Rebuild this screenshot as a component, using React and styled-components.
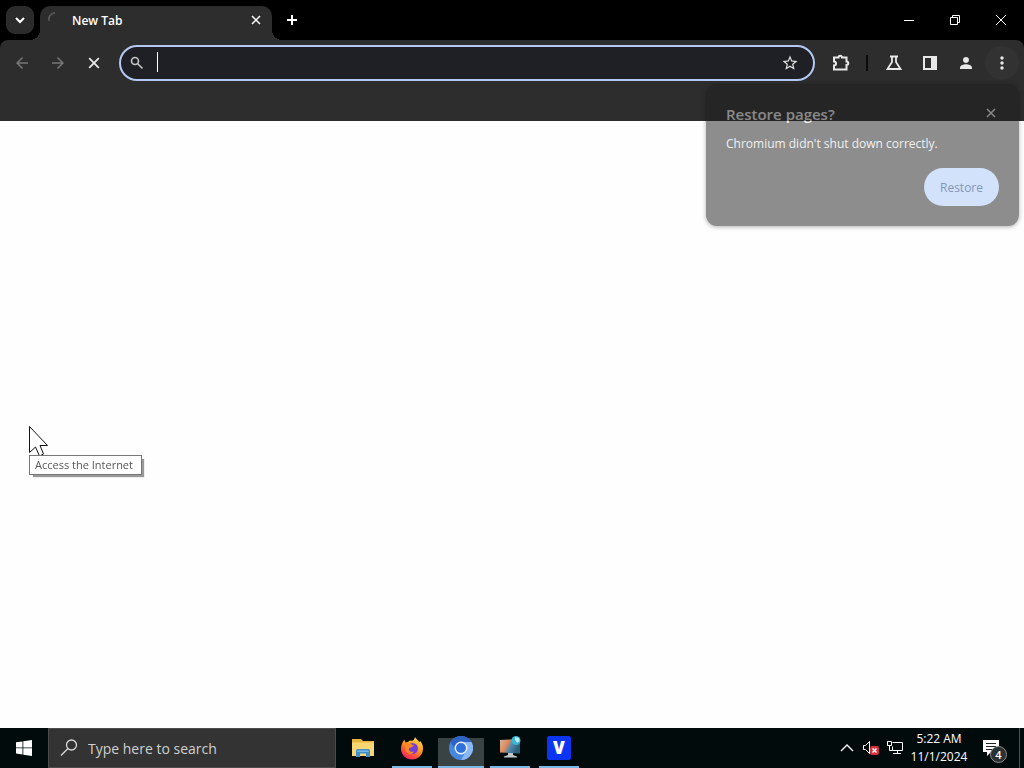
import React from "react";
import styled, { createGlobalStyle } from "styled-components";

const GlobalStyle = createGlobalStyle`
  *, *::before, *::after { box-sizing: border-box; }
  body { margin: 0; background: #fefefe; font-family: "Open Sans", "Noto Sans", sans-serif; }
  button, input { font: inherit; color: inherit; border: 0; padding: 0; background: none; }
  svg { display: block; flex: none; }
`;

const Desktop = styled.div`
  min-height: 100vh;
  display: flex;
  flex-direction: column;
`;

const Browser = styled.div`
  flex: 1;
  display: flex;
  flex-direction: column;
  background: #fefefe;
`;

const TitleBar = styled.header`
  height: 40px;
  display: flex;
  background: #000;
  color: #fff;
`;

const TabSearch = styled.button`
  width: 28px;
  height: 28px;
  margin: 6px 6px 0;
  display: grid;
  place-items: center;
  border-radius: 9px;
  background: #2b2b2b;
`;

const Tab = styled.div`
  position: relative;
  width: 232px;
  height: 34px;
  margin-top: 6px;
  padding: 0 8px;
  display: flex;
  gap: 8px;
  background: #2d2d2d;
  border-radius: 10px 10px 0 0;

  &::before, &::after {
    content: "";
    position: absolute;
    bottom: 0;
    width: 10px;
    height: 10px;
  }
  &::before {
    left: -10px;
    background: radial-gradient(circle at 0 0, transparent 10px, #2d2d2d 10px);
  }
  &::after {
    right: -10px;
    background: radial-gradient(circle at 100% 0, transparent 10px, #2d2d2d 10px);
  }
`;

const TabSpinner = styled.span`
  width: 16px;
  height: 28px;
  display: grid;
  place-items: center;
  color: #555;
`;

const TabTitle = styled.span`
  flex: 1;
  line-height: 30px;
  font-size: 12px;
  font-weight: 600;
`;

const SmallButton = styled.button`
  width: 16px;
  height: 28px;
  display: grid;
  place-items: center;
`;

const NewTab = styled.button`
  width: 28px;
  height: 28px;
  margin: 6px 0 0 6px;
  display: grid;
  place-items: center;
`;

const WindowControls = styled.div`
  margin-left: auto;
  display: flex;
`;

const WindowButton = styled.button`
  width: 46px;
  height: 40px;
  display: grid;
  place-items: center;
`;

const ToolbarBack = styled.div`
  background: #000;
`;

const Toolbar = styled.div`
  position: relative;
  height: 46px;
  padding: 0 5px;
  display: flex;
  align-items: center;
  gap: 2px;
  background: #2d2d2d;
  color: #e3e3e3;
  border-radius: 8px 8px 0 0;
`;

const ToolButton = styled.button`
  width: 34px;
  height: 34px;
  display: grid;
  place-items: center;
  border-radius: 50%;
  color: ${(p) => (p.$dim ? "#777" : "#e8e8e8")};
  background: ${(p) => (p.$lit ? "#323232" : "transparent")};
`;

const Omnibox = styled.label`
  flex: 1;
  height: 36px;
  margin: 0 7px 0 6px;
  padding: 0 14px 0 9px;
  display: flex;
  align-items: center;
  gap: 13px;
  background: #1f2025;
  border: 2px solid #b3c9f3;
  border-radius: 18px;
`;

const AddressField = styled.span`
  flex: 1;
  display: flex;
  align-items: center;
`;

const Caret = styled.span`
  width: 1px;
  height: 20px;
  margin-bottom: 2px;
  background: #fff;
`;

const Address = styled.input`
  flex: 1;
  min-width: 0;
  height: 24px;
  font-size: 14px;
  outline: none;
`;

const StarButton = styled.button`
  width: 18px;
  height: 18px;
`;

const Divider = styled.span`
  width: 3px;
  height: 16px;
  margin: 0 6px;
  background: #0c0c0c;
  border-right: 1px solid #2d2d2d;
`;

const BookmarksBar = styled.div`
  height: 35px;
  background: #2d2d2d;
`;

const Bubble = styled.section`
  position: absolute;
  z-index: 2;
  top: 44px;
  right: 5px;
  width: 313px;
  padding: 17px 20px 20px;
  display: flex;
  flex-direction: column;
  background: #1f1f1f;
  color: #e3e3e3;
  border-radius: 11px;
  box-shadow: 0 1px 4px #0009;
  opacity: 0.5;
`;

const BubbleHead = styled.div`
  display: flex;
  justify-content: space-between;
  height: 26px;
`;

const BubbleTitle = styled.h2`
  margin: 0;
  font-size: 15px;
  line-height: 26px;
  font-weight: 600;
`;

const Dismiss = styled.button`
  width: 16px;
  height: 24px;
  display: grid;
  place-items: center;
`;

const BubbleText = styled.p`
  margin: 7px 0 14px;
  font-size: 12px;
  line-height: 20px;
  font-weight: 500;
`;

const RestoreButton = styled.button`
  && {
    align-self: flex-end;
    width: 75px;
    height: 38px;
    border-radius: 19px;
    background: #a8c7fa;
    color: #062e6f;
    font-size: 12px;
    font-weight: 500;
  }
`;

const Page = styled.main`
  flex: 1;
`;

const Pointer = styled.div`
  position: fixed;
  z-index: 3;
  left: 29px;
  top: 426px;
`;

const Tooltip = styled.div`
  position: absolute;
  left: 0;
  top: 29px;
  height: 20px;
  padding: 0 8px 0 5px;
  background: #fff;
  border: 1px solid #767676;
  box-shadow: 3px 3px 1px -1px #999;
  color: #575757;
  font-size: 11px;
  line-height: 18px;
  white-space: nowrap;
`;

const Taskbar = styled.footer`
  height: 40px;
  display: flex;
  background: #020b0c;
  color: #fff;
`;

const StartButton = styled.button`
  width: 48px;
  display: grid;
  place-items: center;
`;

const SearchBox = styled.label`
  width: 288px;
  padding: 0 11px;
  display: flex;
  align-items: center;
  gap: 10px;
  background: #333;
  border: 1px solid #4c4c4c;
  color: #d8d8d8;
`;

const SearchInput = styled.input`
  flex: 1;
  min-width: 0;
  font-size: 14px;
  outline: none;
  &::placeholder { color: #d0d0d0; opacity: 1; }
`;

const Apps = styled.nav`
  margin-left: 4px;
  display: flex;
  gap: 3px;
`;

const AppButton = styled.button`
  position: relative;
  width: 46px;
  height: 40px;
  display: grid;
  place-items: center;
  background: ${(p) => (p.$active ? "linear-gradient(#020b0c 10px, #3a4344 10px)" : "none")};

  &::after {
    content: "";
    position: absolute;
    bottom: 0;
    left: ${(p) => (p.$active ? "0" : "3px")};
    right: ${(p) => (p.$active ? "0" : "3px")};
    height: 2px;
    background: ${(p) => (p.$open ? "#7cb9e4" : "transparent")};
  }
`;

const VLogo = styled.span`
  width: 24px;
  height: 24px;
  border-radius: 2px;
  background: #0b35f0;
  font-size: 17px;
  line-height: 24px;
  font-weight: 800;
  text-align: center;
`;

const Tray = styled.div`
  margin-left: auto;
  display: flex;
`;

const TrayButton = styled.button`
  width: 24px;
  height: 40px;
  display: grid;
  place-items: center;
`;

const Clock = styled.button`
  width: 64px;
  height: 40px;
  font-size: 12px;
  line-height: 18px;
  text-align: center;
  white-space: nowrap;
`;

const ClockLine = styled.span`
  display: block;
`;

const Notifications = styled.button`
  && {
    position: relative;
    width: 48px;
    height: 40px;
    padding-left: 11px;
    display: grid;
    place-items: center start;
  }
`;

const Badge = styled.span`
  position: absolute;
  left: 19px;
  top: 18px;
  width: 17px;
  height: 17px;
  border: 1px solid #8a8f90;
  border-radius: 50%;
  background: #2a3132;
  font-size: 11px;
  line-height: 15px;
  font-weight: 600;
  text-align: center;
`;

const ShowDesktop = styled.button`
  && {
    width: 5px;
    border-left: 1px solid #4a5253;
  }
`;

const Line = ({ size, d, w = 2, box = 24, ...rest }) => (
  <svg width={size} height={size} viewBox={`0 0 ${box} ${box}`} fill="none" stroke="currentColor" strokeWidth={w} {...rest}>
    <path d={d} />
  </svg>
);

const Solid = ({ size, d, ...rest }) => (
  <svg width={size} height={size} viewBox="0 0 24 24" fill="currentColor" {...rest}>
    <path d={d} />
  </svg>
);

const ARROW_BACK = "M20 11H7.83l5.59-5.59L12 4l-8 8 8 8 1.41-1.41L7.83 13H20v-2z";
const ARROW_NEXT = "M12 4l-1.41 1.41L16.17 11H4v2h12.17l-5.58 5.59L12 20l8-8z";
const STAR = "M22 9.24l-7.19-.62L12 2 9.19 8.63 2 9.24l5.46 4.73L5.82 21 12 17.27 18.18 21l-1.63-7.03L22 9.24zM12 15.4l-3.76 2.27 1-4.28-3.32-2.88 4.38-.38L12 6.1l1.71 4.04 4.38.38-3.32 2.88 1 4.28L12 15.4z";
const PERSON = "M12 12c2.5 0 4.500-2 4.500-4.500S14.500 3 12 3 7.500 5 7.500 7.500 9.500 12 12 12zm0 2c-3.500 0-9 1.800-9 5v2h18v-2c0-3.200-5.500-5-9-5z";
const DOTS = "M12 8c1.100 0 2-.9 2-2s-.9-2-2-2-2 .9-2 2 .9 2 2 2zm0 2c-1.100 0-2 .9-2 2s.9 2 2 2 2-.9 2-2-.9-2-2-2zm0 6c-1.100 0-2 .9-2 2s.9 2 2 2 2-.9 2-2-.9-2-2-2z";
const CROSS = "M1 1l8 8M9 1l-8 8";

const FolderIcon = () => (
  <svg width="24" height="24" viewBox="0 0 24 24">
    <path d="M1 3h9l2 2h11v4H1z" fill="#e8b53c" />
    <path d="M1 6.500h22V20H1z" fill="#f8d772" />
    <path d="M5 21v-6.500q0-1.500 1.500-1.500h11q1.500 0 1.500 1.500V21h-4v-3.500H9V21z" fill="#3f8fd0" />
    <path d="M6.500 14.500h11v1.500h-11z" fill="#7bb8e4" />
  </svg>
);

const FirefoxIcon = () => (
  <svg width="24" height="24" viewBox="0 0 24 24">
    <defs>
      <linearGradient id="fox" x1=".8" y1="0" x2=".25" y2="1">
        <stop offset="0" stopColor="#ffe04a" />
        <stop offset=".45" stopColor="#ff9a22" />
        <stop offset=".75" stopColor="#ff4a3a" />
        <stop offset="1" stopColor="#e9206d" />
      </linearGradient>
    </defs>
    <path d="M15 1c1 2 3 3 4.500 5l.8-1c2 2.500 2.900 5 2.700 8-.4 6-5 10.500-11 10.500S1 19 1 12.800C1 9 2.400 6 4.400 3.800L5.500 6.500l2.800-.8C9.500 4.500 10.500 4.300 12 5c1.500-.8 2.800-2 3-4z" fill="url(#fox)" />
    <circle cx="12.500" cy="12.500" r="5.500" fill="#7440d8" />
    <path d="M5 8c2-1.500 5-1 7 .8l2 .7-2.500 1.700c-1.500.2-3 1-2.700 2.600.4 2 3.200 2.700 5.500 1.400-1.500 3.300-6.500 3.500-8.300.2C5 13.500 5.500 10 5 8z" fill="#ff8a22" />
  </svg>
);

const ChromiumIcon = () => (
  <svg width="24" height="24" viewBox="0 0 24 24">
    <circle cx="12" cy="12" r="12" fill="#4688df" />
    <path d="M1.600 6A12 12 0 0 1 22.400 6H12a6 6 0 0 0-5.200 9z" fill="#2d63c4" />
    <path d="M22.400 6A12 12 0 0 1 12 24l5.200-9A6 6 0 0 0 12 6z" fill="#8bb7f4" />
    <circle cx="12" cy="12" r="6.500" fill="#e9f1ff" />
    <circle cx="12" cy="12" r="5" fill="#2f71db" />
  </svg>
);

const MonitorIcon = () => (
  <svg width="24" height="24" viewBox="0 0 24 24">
    <defs>
      <linearGradient id="screen" x1="0" y1="0" x2="1" y2=".4">
        <stop offset="0" stopColor="#c9b9a4" />
        <stop offset=".4" stopColor="#e58a58" />
        <stop offset=".65" stopColor="#5288ad" />
        <stop offset="1" stopColor="#2a6078" />
      </linearGradient>
    </defs>
    <path d="M2 4l20-1v14.500L2 16.500z" fill="url(#screen)" />
    <path d="M10 17h5v2l4 1.500v1H6v-1l4-1.500z" fill="#c3c7c9" />
    <circle cx="18" cy="4.500" r="4.500" fill="#3cb6d7" />
    <path d="M17 1l4 1 .5 3.500-2.500 1-2-2.500z" fill="#b5f1f3" />
  </svg>
);

export default function App() {
  return (
    <>
      <GlobalStyle />
      <Desktop>
        <Browser>
          <TitleBar>
            <TabSearch aria-label="Search tabs">
              <Line size={10} box={10} d="M1 3l4 4 4-4" />
            </TabSearch>
            <Tab>
              <TabSpinner>
                <Line size={16} box={16} d="M1 9C0 5 3 1 7 1" />
              </TabSpinner>
              <TabTitle>New Tab</TabTitle>
              <SmallButton aria-label="Close tab">
                <Line size={10} box={10} w={1.5} d={CROSS} />
              </SmallButton>
            </Tab>
            <NewTab aria-label="New tab">
              <Line size={12} box={12} d="M6 1v10M1 6h10" />
            </NewTab>
            <WindowControls>
              <WindowButton aria-label="Minimize">
                <Line size={10} box={10} w={1} d="M0 5.500h10" />
              </WindowButton>
              <WindowButton aria-label="Restore down">
                <Line size={10} box={10} w={1} d="M.5 2.500h7v7h-7zM2.500 2.500v-2h7v7h-2" />
              </WindowButton>
              <WindowButton aria-label="Close">
                <Line size={10} box={10} w={1} d="M0 0l10 10M10 0L0 10" />
              </WindowButton>
            </WindowControls>
          </TitleBar>
          <ToolbarBack>
            <Toolbar>
              <ToolButton $dim aria-label="Back"><Solid size={18} d={ARROW_BACK} /></ToolButton>
              <ToolButton $dim aria-label="Forward"><Solid size={18} d={ARROW_NEXT} /></ToolButton>
              <ToolButton aria-label="Stop loading">
                <Line size={12} box={12} w={1.8} d="M1.200 1.200l9.600 9.600M10.800 1.200l-9.600 9.600" />
              </ToolButton>
              <Omnibox>
                <Line size={14} box={14} w={1.6} d="M8.500 5a3.500 3.500 0 1 1-7 0 3.500 3.500 0 0 1 7 0zM7.500 7.500l5 5" color="#c7c7c7" />
                <AddressField>
                  <Caret />
                  <Address aria-label="Address and search bar" />
                </AddressField>
                <StarButton aria-label="Bookmark this tab"><Solid size={18} d={STAR} /></StarButton>
              </Omnibox>
              <ToolButton aria-label="Extensions">
                <Line size={20} box={20} d="M3 4.500h4.500a1.500 1.500 0 0 1 3.500 0H15.500v4a1.500 1.500 0 0 1 0 3.500v4.500H3v-4a2 2 0 0 0 0-4z" />
              </ToolButton>
              <Divider />
              <ToolButton aria-label="Experiments">
                <Line size={18} box={18} w={1.8} d="M5 2.500h8M7 3v5l-4.500 7h13L11 8V3" />
              </ToolButton>
              <ToolButton aria-label="Side panel">
                <svg width="16" height="16" viewBox="0 0 16 16" fill="none" stroke="currentColor" strokeWidth="2">
                  <path d="M2 2h12v12H2z" />
                  <path d="M10 2h4v12h-4z" fill="currentColor" />
                </svg>
              </ToolButton>
              <ToolButton aria-label="Profile"><Solid size={16} d={PERSON} /></ToolButton>
              <ToolButton $lit aria-label="Menu"><Solid size={20} d={DOTS} /></ToolButton>

              <Bubble>
                <BubbleHead>
                  <BubbleTitle>Restore pages?</BubbleTitle>
                  <Dismiss aria-label="Dismiss">
                    <Line size={10} box={10} w={1.5} d={CROSS} />
                  </Dismiss>
                </BubbleHead>
                <BubbleText>Chromium didn't shut down correctly.</BubbleText>
                <RestoreButton>Restore</RestoreButton>
              </Bubble>
            </Toolbar>
          </ToolbarBack>
          <BookmarksBar />
          <Page />
        </Browser>

        <Taskbar>
          <StartButton aria-label="Start">
            <Solid size={16} viewBox="0 0 16 16" d="M0 2.300l6.500-.9v6.100H0zM7.300 1.300L16 0v7.500H7.300zM0 8.300h6.500v6.200L0 13.600zM7.300 8.300H16V16l-8.700-1.300z" />
          </StartButton>
          <SearchBox>
            <Line size={18} box={18} w={1.3} d="M16.500 6a5 5 0 1 1-10 0 5 5 0 0 1 10 0zM8 9.500L1 16.500" />
            <SearchInput aria-label="Search" placeholder="Type here to search" />
          </SearchBox>
          <Apps>
            <AppButton aria-label="File Explorer"><FolderIcon /></AppButton>
            <AppButton $open aria-label="Firefox"><FirefoxIcon /></AppButton>
            <AppButton $open $active aria-label="Chromium"><ChromiumIcon /></AppButton>
            <AppButton $open aria-label="Remote display"><MonitorIcon /></AppButton>
            <AppButton $open aria-label="V"><VLogo>V</VLogo></AppButton>
          </Apps>
          <Tray>
            <TrayButton aria-label="Show hidden icons">
              <Line size={14} box={14} w={1.4} d="M1 10l6-6 6 6" />
            </TrayButton>
            <TrayButton aria-label="Volume muted">
              <svg width="18" height="16" viewBox="0 0 18 16">
                <path d="M1.500 5.500h2l4-4v12l-4-4h-2z" fill="none" stroke="#fff" />
                <rect x="8" y="6" width="9" height="9" rx="2" fill="#d2323c" />
                <path d="M10.500 8.500l4 4M14.500 8.500l-4 4" stroke="#fff" strokeWidth="1.500" />
              </svg>
            </TrayButton>
            <TrayButton aria-label="Network">
              <svg width="16" height="16" viewBox="0 0 16 16" fill="none" stroke="#fff">
                <path d="M5.500 2.500h10v8h-10v-4M10.500 10.500v3M6 13.500h8M.5 1.500h4v4h-4zM2.500 5.500v5h3" />
              </svg>
            </TrayButton>
            <Clock>
              <ClockLine>5:22 AM</ClockLine>
              <ClockLine>11/1/2024</ClockLine>
            </Clock>
            <Notifications aria-label="4 notifications">
              <svg width="18" height="18" viewBox="0 0 18 18">
                <path d="M1 1h16v12H9l-4 4v-4H1z" fill="#fff" />
                <path d="M4 4.500h10M4 7.500h10M4 10.500h6" stroke="#1b2526" />
              </svg>
              <Badge>4</Badge>
            </Notifications>
            <ShowDesktop aria-label="Show desktop" />
          </Tray>
        </Taskbar>
      </Desktop>

      <Pointer>
        <svg width="20" height="30" viewBox="0 0 20 30">
          <path d="M.5.5v26l6-5.500 4 9 4-2-3.500-8.500h7.500z" fill="#fff" stroke="#111" />
        </svg>
        <Tooltip role="tooltip">Access the Internet</Tooltip>
      </Pointer>
    </>
  );
}
